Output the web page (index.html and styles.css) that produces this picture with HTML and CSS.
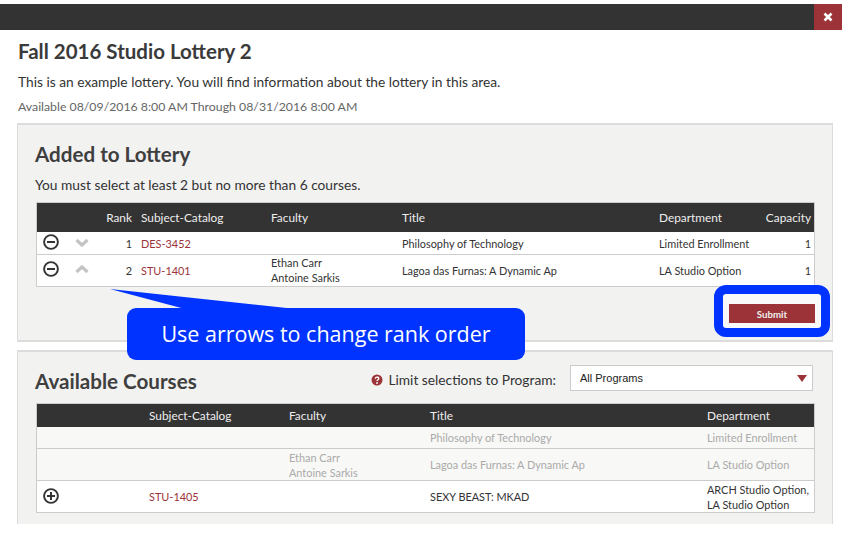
FILE: index.html
```html
<!DOCTYPE html>
<html lang="en">
<head>
<meta charset="utf-8">
<title>Fall 2016 Studio Lottery 2</title>
<link rel="stylesheet" href="styles.css">
</head>
<body>
<div class="modal">
  <div class="topbar">
    <button class="close" aria-label="Close"><svg width="10" height="10" viewBox="0 0 10 10"><path d="M1.5 1.5l7 7M8.5 1.5l-7 7" stroke="#fff" stroke-width="2.6" fill="none"/></svg></button>
  </div>
  <div class="content">
    <h1 class="title">Fall 2016 Studio Lottery 2</h1>
    <p class="intro">This is an example lottery. You will find information about the lottery in this area.</p>
    <p class="dates">Available 08/09/2016 8:00 AM Through 08/31/2016 8:00 AM</p>

    <section class="panel panel-added">
      <h2 class="heading">Added to Lottery</h2>
      <p class="note">You must select at least 2 but no more than 6 courses.</p>
      <div class="table">
        <div class="row head cols-a">
          <span></span><span></span><span class="rank">Rank</span><span>Subject-Catalog</span><span>Faculty</span><span>Title</span><span>Department</span><span class="num">Capacity</span>
        </div>
        <div class="row r1 cols-a">
          <svg class="icon" width="16" height="16" viewBox="0 0 16 16"><circle cx="8" cy="8" r="6.9" fill="none" stroke="#333" stroke-width="1.9"/><path d="M4 8h8" stroke="#333" stroke-width="2"/></svg>
          <svg class="chev" width="16" height="10" viewBox="0 0 16 10"><path d="M2.5 2l5.5 5 5.500-5" fill="none" stroke="#c4c4c4" stroke-width="3.200"/></svg>
          <span class="rank">1</span><a class="link">DES-3452</a><span></span><span>Philosophy of Technology</span><span>Limited Enrollment</span><span class="num">1</span>
        </div>
        <div class="row r2 cols-a">
          <svg class="icon" width="16" height="16" viewBox="0 0 16 16"><circle cx="8" cy="8" r="6.9" fill="none" stroke="#333" stroke-width="1.9"/><path d="M4 8h8" stroke="#333" stroke-width="2"/></svg>
          <svg class="chev" width="16" height="10" viewBox="0 0 16 10"><path d="M2.500 8l5.500-5 5.500 5" fill="none" stroke="#c4c4c4" stroke-width="3.200"/></svg>
          <span class="rank">2</span><a class="link">STU-1401</a><span class="multi">Ethan Carr<br>Antoine Sarkis</span><span>Lagoa das Furnas: A Dynamic Ap</span><span>LA Studio Option</span><span class="num">1</span>
        </div>
      </div>
      <div class="actions">
        <div class="submit-wrap">
          <div class="highlight"></div>
          <button class="submit">Submit</button>
        </div>
      </div>
      <div class="callout">
        <svg class="pointer" width="190" height="20" viewBox="0 0 190 20"><path d="M0 0L75 20H186Z" fill="#0033ff"/></svg>
        Use arrows to change rank order
      </div>
    </section>

    <section class="panel panel-available">
      <div class="avail-top">
        <h2 class="heading">Available Courses</h2>
        <div class="limit">
          <svg class="help" width="12" height="12" viewBox="0 0 12 12"><circle cx="6" cy="6" r="5.500" fill="#9c3338"/><path d="M4.300 4.700c0-2.200 3.500-2.200 3.500-.2 0 1.300-1.800 1.300-1.800 2.600" fill="none" stroke="#fff" stroke-width="1.300"/><circle cx="6" cy="9" r=".9" fill="#fff"/></svg>
          <span class="limit-label">Limit selections to Program:</span>
          <div class="select"><span>All Programs</span><i class="caret"></i></div>
        </div>
      </div>
      <div class="table">
        <div class="row head head-b cols-b">
          <span></span><span>Subject-Catalog</span><span>Faculty</span><span>Title</span><span>Department</span>
        </div>
        <div class="row b1 cols-b off">
          <span></span><span></span><span></span><span>Philosophy of Technology</span><span>Limited Enrollment</span>
        </div>
        <div class="row b2 cols-b off">
          <span></span><span></span><span class="multi">Ethan Carr<br>Antoine Sarkis</span><span>Lagoa das Furnas: A Dynamic Ap</span><span>LA Studio Option</span>
        </div>
        <div class="row b3 cols-b">
          <svg class="icon" width="16" height="16" viewBox="0 0 16 16"><circle cx="8" cy="8" r="6.9" fill="none" stroke="#333" stroke-width="1.9"/><path d="M4 8h8M8 4v8" stroke="#333" stroke-width="2"/></svg>
          <a class="link">STU-1405</a><span></span><span>SEXY BEAST: MKAD</span><span class="multi">ARCH Studio Option,<br>LA Studio Option</span>
        </div>
      </div>
    </section>
  </div>
</div>
</body>
</html>
```

FILE: styles.css
```css
* { box-sizing: border-box; }
html, body { margin: 0; padding: 0; background: #fff; }
body { width: 842px; height: 536px; overflow: hidden; font-family: Lato, "Liberation Sans", sans-serif; color: #333; }
.modal { height: 524px; overflow: hidden; padding-top: 4px; }
.topbar { height: 26px; background: #333; display: flex; justify-content: flex-end; }
.close { width: 28px; height: 26px; padding: 0; border: 0; background: #9c3338; display: flex; align-items: center; justify-content: center; }
.content { padding: 0 9px 0 17px; }
.title { margin: 0; padding-top: 9px; padding-left: 1px; font-size: 20.5px; line-height: 24px; font-weight: 700; color: #3a3a3a; }
.intro { margin: 10px 0 0 1px; font-size: 13.75px; line-height: 17px; color: #333; }
.dates { margin: 9px 0 0 1px; font-size: 12.3px; line-height: 15px; color: #666; }
.panel { position: relative; background: #f2f2f1; border: 1px solid #dcdcdc; padding: 0 17px 0 18px; }
.panel-added { margin-top: 9px; height: 219px; border-top-width: 2px; border-bottom-width: 2px; }
.panel-available { margin-top: 8px; height: 200px; border-top-width: 2px; }
.heading { margin: 0 0 0 -1px; font-size: 20.6px; line-height: 26px; font-weight: 700; color: #3f3f3f; }
.panel-added .heading { padding-top: 16px; box-sizing: content-box; height: 26px; }
.note { margin: 9px 0 0 -1px; font-size: 13.75px; line-height: 17px; color: #333; }
.table { margin-top: 9px; width: 779px; border: 1px solid #ccc; background: #fff; }
.row { display: grid; align-items: center; font-size: 10.9px; line-height: 15px; border-bottom: 1px solid #ccc; }
.row:last-child { border-bottom: 0; }
.cols-a { grid-template-columns: 32px 27px 45px 130px 131px 257px 100px 1fr; }
.cols-b { grid-template-columns: 112px 140px 141px 277px 1fr; }
.head { height: 29px; background: #333; color: #eee; font-size: 11.85px; border-bottom: 0; }
.head-b { height: 23px; }
.r1 { height: 23px; }
.r2 { height: 31px; }
.r1 .icon, .b3 .icon { margin-top: -2px; }
.r2 .icon, .r2 .chev { margin-top: -4px; }
.r2 .multi { margin-top: -2px; }
.b1 { height: 22px; background: #f8f8f6; }
.b2 { height: 32px; background: #f8f8f6; }
.b3 { height: 31px; }
.off { color: #aaa; }
.num { text-align: right; padding-right: 3px; }
.rank { text-align: right; padding-right: 9px; }
.link { color: #9c3338; }
.icon { margin-left: 6px; display: block; }
.chev { margin-left: 5px; display: block; }
.actions { display: flex; justify-content: flex-end; margin-top: 17px; }
.submit-wrap { position: relative; width: 86px; height: 19px; }
.highlight { position: absolute; top: -19px; bottom: -14px; left: -15px; right: -15px; border: 9px solid #0033ff; border-radius: 12px; background: #f9f9f9; }
.submit { position: relative; display: block; width: 100%; height: 100%; padding: 0; border: 0; background: #9c3338; color: #eee; font-family: Lato, sans-serif; font-size: 9.7px; font-weight: 700; }
.callout { position: absolute; left: 109px; top: 183px; width: 398px; height: 52px; background: #0033ff; border-radius: 9px; color: #fff; font-family: "Open Sans", sans-serif; font-size: 21.5px; line-height: 52px; text-align: center; z-index: 2; }
.pointer { position: absolute; left: -17px; top: -19px; }
.avail-top { display: flex; justify-content: space-between; height: 51px; }
.panel-available .heading { padding-top: 16px; box-sizing: content-box; }
.limit { display: flex; align-items: flex-start; padding-top: 13px; }
.help { margin: 9px 5px 0 0; }
.limit-label { font-size: 13.75px; line-height: 17px; margin: 6px 14px 0 0; }
.select { width: 243px; height: 26px; margin-right: 2px; background: #fff; border: 1px solid #ccc; display: flex; align-items: center; justify-content: space-between; padding: 0 5px 0 9px; font-family: "Liberation Sans", sans-serif; font-size: 11px; color: #222; }
.caret { width: 0; height: 0; border: 5px solid transparent; border-top: 7px solid #9c3338; border-bottom: 0; }
.panel-available .table { margin-top: 0; }
```
